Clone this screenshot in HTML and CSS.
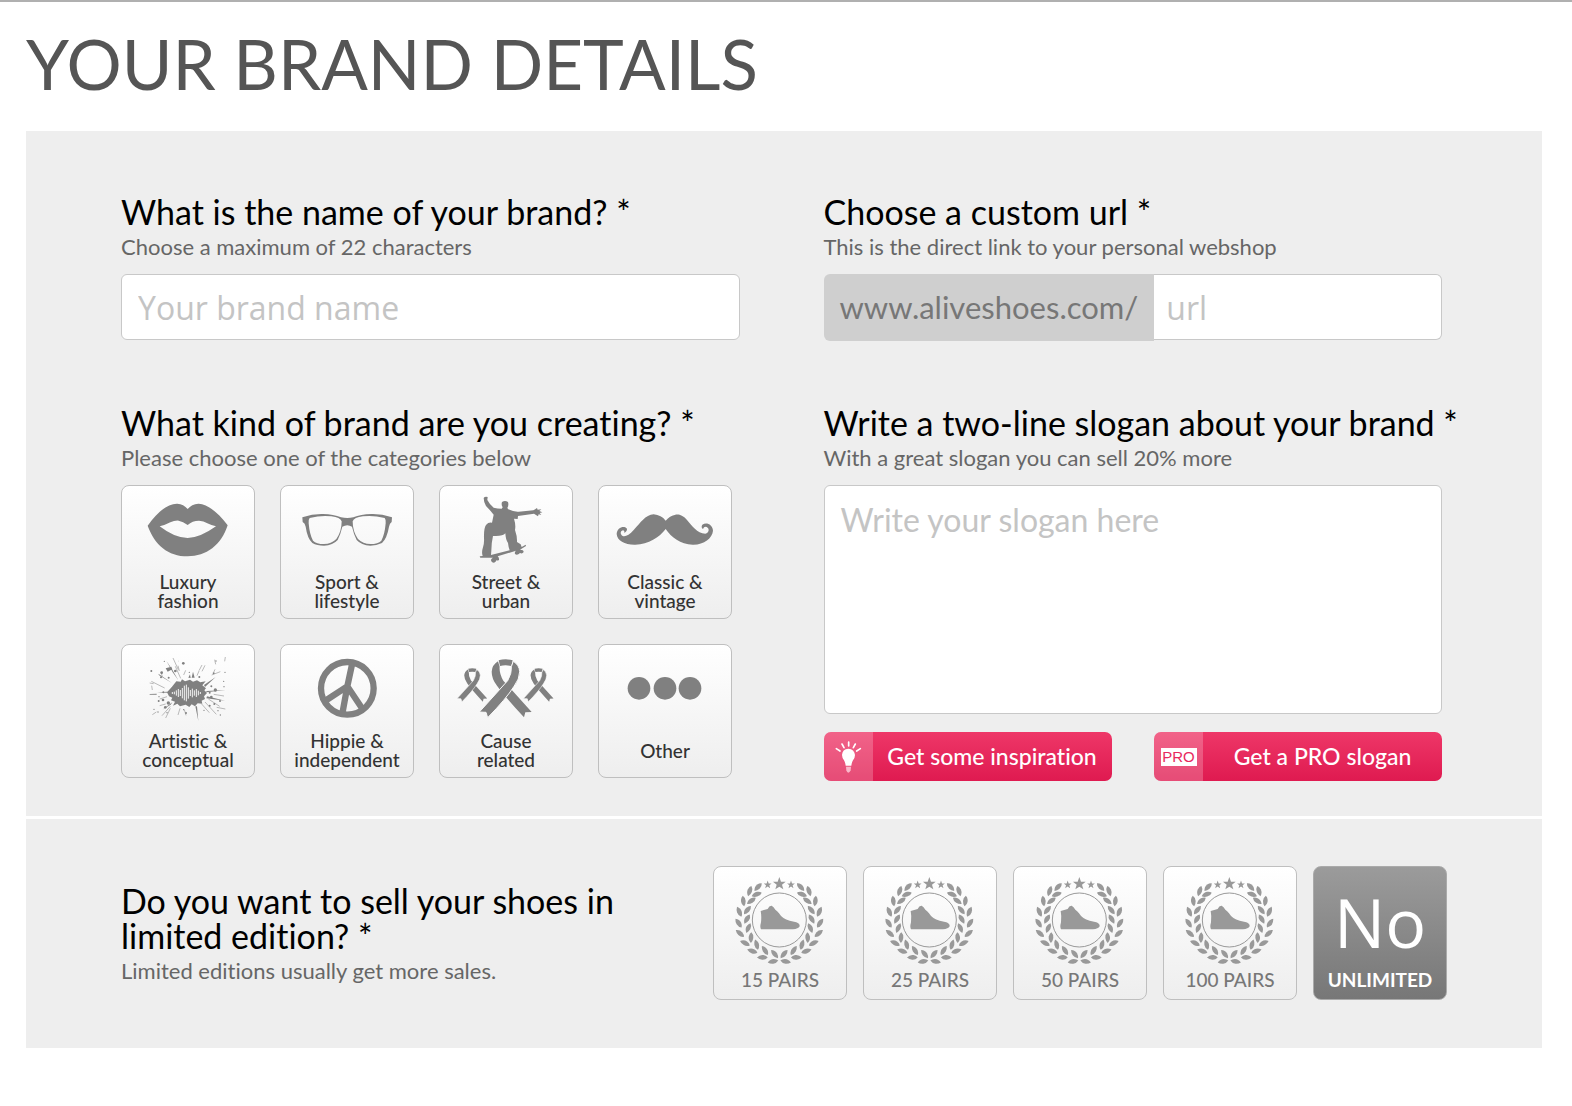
FILE: index.html
```html
<!DOCTYPE html>
<html lang="en">
<head>
    <meta charset="UTF-8">
    <title>Your Brand Details</title>
    <link rel="stylesheet" href="styles.css">
</head>
<body>
    <!-- shared shapes -->
    <svg class="defs" width="0" height="0" aria-hidden="true">
        <defs>
            <path id="leaf" d="M-16 2 Q-8 -8 3 -7 Q12 -6 16 -1 Q10 7 0 7 Q-9 7 -16 2Z"/>
            <path id="star" d="M0 -20 L5 -6 L19 -6 L8 3 L12 17 L0 9 L-12 17 L-8 3 L-19 -6 L-5 -6Z"/>
            <g id="branch">
                <use href="#leaf" transform="translate(175 94) rotate(-42)"/>
                <use href="#leaf" transform="translate(150 106) rotate(-67)"/>
                <use href="#leaf" transform="translate(131 136) rotate(-92)"/>
                <use href="#leaf" transform="translate(119 168) rotate(72)"/>
                <use href="#leaf" transform="translate(117 202) rotate(60)"/>
                <use href="#leaf" transform="translate(121 233) rotate(45)"/>
                <use href="#leaf" transform="translate(136 262) rotate(30)"/>
                <use href="#leaf" transform="translate(158 286) rotate(22)"/>
                <use href="#leaf" transform="translate(188 305) rotate(5)"/>
                <use href="#leaf" transform="translate(220 317) rotate(-5)"/>
                <use href="#leaf" transform="translate(171 116) rotate(-15)"/>
                <use href="#leaf" transform="translate(155 135) rotate(-30)"/>
                <use href="#leaf" transform="translate(143 163) rotate(-45)"/>
                <use href="#leaf" transform="translate(142 190) rotate(-55)"/>
                <use href="#leaf" transform="translate(146 217) rotate(-62)"/>
                <use href="#leaf" transform="translate(154 246) rotate(-82)"/>
                <use href="#leaf" transform="translate(171 267) rotate(80)"/>
                <use href="#leaf" transform="translate(196 284) rotate(62)"/>
                <use href="#leaf" transform="translate(225 295) rotate(55)"/>
            </g>
            <symbol id="laurel" viewBox="40 31 402 300">
                <use href="#branch"/>
                <use href="#branch" transform="translate(478 0) scale(-1 1)"/>
                <use href="#star" transform="translate(239 84)"/>
                <use href="#star" transform="translate(204 87) scale(.62)"/>
                <use href="#star" transform="translate(274 87) scale(.62)"/>
                <circle cx="239" cy="193" r="81" fill="none" stroke="#999" stroke-width="3"/>
                <path d="M183 166 L204 160 Q209 149 216 150 Q222 153 227 162 Q234 167 238 173 Q248 190 270 195 L290 200 Q301 204 300 212 Q296 220 280 221 H184 Q180 215 184 200 Q186 180 183 166Z"/>
            </symbol>
            <g id="ribbon">
                <path d="M189 108 Q190 88 208 77 L213 93 Q211 112 224 135 L309 229 L290 230 L286 245 Q230 185 205 150 Q189 130 189 108Z"/>
                <path d="M210 74 Q231 68 252 74 L248 91 Q231 87 214 91Z"/>
                <path d="M273 108 Q272 88 254 77 L248 93 Q250 112 237 135 L152 229 L172 230 L177 246 Q232 190 256 152 Q273 130 273 108Z" stroke="#f8f8f8" stroke-width="3"/>
            </g>
        </defs>
    </svg>

    <h1>YOUR BRAND DETAILS</h1>

    <form id="brand-form">
        <section class="panel details">
            <div class="field">
                <label class="question" for="brand_name">What is the name of your brand? *</label>
                <p class="hint">Choose a maximum of 22 characters</p>
                <input class="text-input" type="text" id="brand_name" name="brand_name" maxlength="22" placeholder="Your brand name">
            </div>

            <div class="field">
                <label class="question" for="brand_url">Choose a custom url *</label>
                <p class="hint">This is the direct link to your personal webshop</p>
                <div class="url-group">
                    <span class="url-prefix">www.aliveshoes.com/</span>
                    <input class="text-input" type="text" id="brand_url" name="brand_url" placeholder="url">
                </div>
            </div>

            <div class="field" role="radiogroup" aria-labelledby="kind-title">
                <h2 class="question" id="kind-title">What kind of brand are you creating? *</h2>
                <p class="hint">Please choose one of the categories below</p>
                <div class="categories">
                    <label class="tile">
                        <input type="radio" name="kind" value="luxury">
                        <svg viewBox="34 25 402 240">
                            <path fill-rule="evenodd" d="M114 147 C140 110 172 80 203 81 Q222 82 234 97 Q246 82 266 81 C292 80 328 110 354 146 C335 205 290 239 234 239 C175 239 135 205 114 147Z M150 149 Q165 146 182 137 Q195 131 207 132 Q220 134 234 145 Q248 132 268 132 Q282 133 293 140 Q305 146 319 149 Q270 184 234 184 Q195 184 150 149Z"/>
                        </svg>
                        <span>Luxury<br>fashion</span>
                    </label>
                    <label class="tile">
                        <input type="radio" name="kind" value="sport">
                        <svg viewBox="511 25 402 240">
                            <path fill-rule="evenodd" d="M578 122 Q610 111 640 112 Q672 113 694 122 Q713 126 731 122 Q753 113 785 112 Q815 111 847 122 L846 136 Q840 140 838 150 Q832 185 817 199 Q800 207 782 207 Q755 206 741 190 Q732 172 727 150 Q713 141 698 150 Q693 172 684 190 Q670 206 643 207 Q622 207 608 199 Q593 185 588 150 Q586 140 579 136Z M600 124 Q635 115 665 119 Q692 122 696 134 Q696 165 680 187 Q665 202 643 202 Q620 202 610 192 Q600 175 597 140 Q596 128 600 124Z M825 124 Q790 115 760 119 Q733 122 729 134 Q729 165 745 187 Q760 202 782 202 Q805 202 815 192 Q825 175 828 140 Q829 128 825 124Z"/>
                        </svg>
                        <span>Sport &amp;<br>lifestyle</span>
                    </label>
                    <label class="tile">
                        <input type="radio" name="kind" value="street">
                        <svg viewBox="31 25 402 240">
                            <path d="M165 64 Q168 59 177 61 L176 70 Q182 82 195 93 Q206 96 219 96 L222 92 Q217 84 220 76 Q229 70 238 76 Q241 85 236 94 L239 98 Q255 106 270 105 L314 101 Q320 98 325 94 L327 99 L338 98 L332 103 L341 107 L333 109 L338 115 L330 113 L328 119 L316 111 L268 118 L267 127 L256 126 Q262 145 259 160 Q266 180 265 196 L276 203 L279 211 L291 204 L292 208 L274 219 Q285 219 285 226 Q281 233 274 229 Q266 237 259 232 Q257 226 262 222 L207 239 Q212 243 211 249 Q208 253 203 251 Q202 257 196 258 Q187 257 187 249 Q189 244 193 243 L155 243 L153 239 L162 238 Q158 227 163 212 Q167 200 166 185 Q165 155 172 145 Q179 136 190 138 L195 114 Q183 99 172 88 Q165 76 165 64Z M193 178 Q188 200 188 222 L187 235 L243 221 Q239 210 238 199 Q231 190 230 170 Q222 180 193 178Z" fill-rule="evenodd"/>
                        </svg>
                        <span>Street &amp;<br>urban</span>
                    </label>
                    <label class="tile">
                        <input type="radio" name="kind" value="classic">
                        <svg viewBox="508 25 402 240">
                            <path d="M711 132 Q698 115 675 113 C650 114 635 140 615 160 C602 175 590 181 582 178 C573 173 575 161 584 161 Q589 164 587 169 Q598 162 594 155 C586 146 565 152 564 172 C565 192 590 205 620 204 C660 203 692 182 711 157 C728 182 755 203 792 204 C825 205 851 185 853 162 C852 143 833 135 821 144 Q816 152 823 157 Q826 149 834 151 C843 155 842 168 830 171 C805 170 790 147 775 130 C760 113 748 112 738 115 Q722 119 711 132Z"/>
                        </svg>
                        <span>Classic &amp;<br>vintage</span>
                    </label>
                    <label class="tile">
                        <input type="radio" name="kind" value="artistic">
                        <svg viewBox="34 25 402 240">
                            <path d="M172 170 L187 153 L200 137 L213 138 L217 131 L226 137 L241 132 L250 138 L262 134 L272 140 L288 137 L278 149 L289 158 L284 164 L292 172 L283 182 L286 190 L276 195 L278 204 L264 203 L256 212 L246 206 L239 214 L228 207 L211 212 L203 204 L190 210 L196 198 L184 194 L188 186 L178 182Z"/>
                            <path d="M170 75 L187 101 L206 134 L189 110Z M168 98 L185 93 L188 101 L174 108Z M183 207 L158 222 L188 200Z M283 148 L318 124 L286 154Z M290 166 L348 163 L290 170Z M246 126 L250 108 L255 126Z M262 212 L266 256 L257 212Z M292 182 L346 195 L290 188Z M120 175 L141 174 L141 177 L120 177Z M146 114 L188 143 L148 119Z M236 126 L241 116 L243 127Z M142 170 L174 168 L174 171Z"/>
                            <path class="spray" d="M190 67 L206 102 M197 92 L213 128 M205 90 L209 106 M228 104 L222 118 M268 106 L262 120 M277 88 L268 105 M286 89 L277 107 M125 137 L165 157 M120 142 L132 144 M150 190 L172 183 M150 210 L168 205 M157 240 L182 212 M182 218 L168 247 M211 218 L205 238 M224 222 L229 239 M296 190 L330 212 M286 199 L320 236 M306 118 L332 108 M312 176 L343 181 M276 205 L299 231 M154 109 L158 123 M312 110 L316 101 M315 72 L318 86 M347 64 L345 77 M126 150 L128 163 M128 237 L140 229 M321 215 L347 220"/>
                            <g>
                                <circle cx="221" cy="83" r="4"/><circle cx="156" cy="111" r="4"/><circle cx="125" cy="106" r="3"/><circle cx="154" cy="125" r="3"/>
                                <circle cx="317" cy="163" r="5"/><circle cx="300" cy="171" r="3"/><circle cx="305" cy="152" r="3"/><circle cx="343" cy="153" r="2"/>
                                <circle cx="176" cy="202" r="5"/><circle cx="160" cy="193" r="4"/><circle cx="147" cy="196" r="3"/><circle cx="167" cy="215" r="4"/>
                                <circle cx="305" cy="184" r="4"/><circle cx="314" cy="205" r="3"/><circle cx="325" cy="225" r="2"/><circle cx="332" cy="238" r="2"/>
                                <circle cx="148" cy="183" r="2"/><circle cx="300" cy="210" r="3"/><circle cx="229" cy="232" r="3"/><circle cx="222" cy="222" r="2"/>
                                <circle cx="164" cy="77" r="2"/><circle cx="177" cy="126" r="3"/><circle cx="197" cy="106" r="4"/><circle cx="269" cy="124" r="3"/>
                                <circle cx="342" cy="137" r="2"/><circle cx="319" cy="76" r="2"/><circle cx="312" cy="113" r="3"/><circle cx="133" cy="221" r="2"/>
                                <circle cx="145" cy="229" r="2"/><circle cx="161" cy="170" r="3"/><circle cx="331" cy="196" r="3"/><circle cx="346" cy="110" r="2"/>
                                <circle cx="283" cy="224" r="2"/><circle cx="172" cy="231" r="2"/><circle cx="206" cy="76" r="1"/><circle cx="239" cy="110" r="2"/>
                            </g>
                            <path fill="none" stroke="#f5f5f5" stroke-width="3" d="M188 169V175 M194 168V176 M200 164V180 M206 160V184 M212 163V181 M218 157V188 M224 150V194 M230 147V197 M236 155V189 M242 163V181 M248 159V185 M254 164V180 M260 160V184 M266 165V179 M272 169V175"/>
                        </svg>
                        <span>Artistic &amp;<br>conceptual</span>
                    </label>
                    <label class="tile">
                        <input type="radio" name="kind" value="hippie">
                        <svg viewBox="511 25 402 240">
                            <g fill="none" stroke="#808080" stroke-width="19">
                                <circle cx="713" cy="158" r="79"/>
                                <path d="M728 82 L713 152 L698 234 M646 196 L713 152 L760 222"/>
                            </g>
                        </svg>
                        <span>Hippie &amp;<br>independent</span>
                    </label>
                    <label class="tile">
                        <input type="radio" name="kind" value="cause">
                        <svg viewBox="31 25 402 240">
                            <use href="#ribbon" transform="translate(-2 57) scale(.575)"/>
                            <use href="#ribbon" transform="translate(197 57) scale(.575)"/>
                            <use href="#ribbon"/>
                        </svg>
                        <span>Cause<br>related</span>
                    </label>
                    <label class="tile">
                        <input type="radio" name="kind" value="other">
                        <svg viewBox="508 25 402 240">
                            <circle cx="631" cy="158" r="34"/>
                            <circle cx="709" cy="158" r="34"/>
                            <circle cx="784" cy="158" r="34"/>
                        </svg>
                        <span>Other</span>
                    </label>
                </div>
            </div>

            <div class="field">
                <label class="question" for="slogan">Write a two-line slogan about your brand *</label>
                <p class="hint">With a great slogan you can sell 20% more</p>
                <textarea class="text-input" id="slogan" name="slogan" placeholder="Write your slogan here"></textarea>
                <div class="actions">
                    <button type="button" class="btn">
                        <span class="btn-icon">
                            <svg viewBox="10 37 147 147">
                                <path fill="#fff" d="M64 106 Q65 88 83 87 Q101 88 103 106 Q103 114 97 122 Q93 129 92 138 H75 Q74 129 70 122 Q64 114 64 106Z"/>
                                <path fill="#f9b9cb" d="M76 141 H91 L90 152 Q87 159 83 159 Q79 159 77 152Z"/>
                                <path fill="none" stroke="#fff" stroke-width="5" stroke-linecap="round" d="M84 67V79 M64 73L70 84 M104 73L98 84 M47 87L58 94 M119 87L108 94"/>
                            </svg>
                        </span>
                        <span class="btn-text">Get some inspiration</span>
                    </button>
                    <button type="button" class="btn">
                        <span class="btn-icon"><span class="pro">PRO</span></span>
                        <span class="btn-text">Get a PRO slogan</span>
                    </button>
                </div>
            </div>
        </section>

        <section class="panel edition" role="radiogroup" aria-labelledby="edition-title">
            <div class="edition-text">
                <h2 class="question" id="edition-title">Do you want to sell your shoes in limited edition? *</h2>
                <p class="hint">Limited editions usually get more sales.</p>
            </div>
            <div class="editions">
                <label class="tile pairs">
                    <input type="radio" name="edition" value="15">
                    <svg><use href="#laurel"/></svg>
                    <span>15 PAIRS</span>
                </label>
                <label class="tile pairs">
                    <input type="radio" name="edition" value="25">
                    <svg><use href="#laurel"/></svg>
                    <span>25 PAIRS</span>
                </label>
                <label class="tile pairs">
                    <input type="radio" name="edition" value="50">
                    <svg><use href="#laurel"/></svg>
                    <span>50 PAIRS</span>
                </label>
                <label class="tile pairs">
                    <input type="radio" name="edition" value="100">
                    <svg><use href="#laurel"/></svg>
                    <span>100 PAIRS</span>
                </label>
                <label class="tile pairs selected">
                    <input type="radio" name="edition" value="unlimited" checked>
                    <b class="no">No</b>
                    <span>UNLIMITED</span>
                </label>
            </div>
        </section>
    </form>
</body>
</html>
```

FILE: styles.css
```css
* {
    box-sizing: border-box;
}
body {
    margin: 0;
    padding: 0 30px 0 26px;
    border-top: 2px solid #b0b0b0;
    background: #fff;
    font-family: Lato, sans-serif;
    font-variant-ligatures: none;
    color: #000;
}
.defs {
    position: absolute;
}
h1 {
    margin: 0;
    padding: 20px 0 25px;
    font-size: 69px;
    line-height: 84px;
    font-weight: 400;
    color: #555;
}
.panel {
    background: #eee;
    padding: 63px 100px 35px 95px;
}
.details {
    display: grid;
    grid-template-columns: 1fr 1fr;
    column-gap: 84px;
    row-gap: 64px;
}
.field {
    min-width: 0;
}
.question {
    display: block;
    margin: 0;
    font-size: 34px;
    line-height: 35px;
    font-weight: 400;
    white-space: nowrap;
}
.hint {
    margin: 5px 0 14px;
    font-size: 22px;
    line-height: 26px;
    color: #666;
}
.text-input {
    display: block;
    width: 100%;
    height: 66px;
    padding: 0 16px;
    border: 1px solid #c8c8c8;
    border-radius: 6px;
    background: #fff;
    font-family: "Open Sans", sans-serif;
    font-size: 32px;
    color: #333;
}
.text-input::placeholder {
    color: #c4c4c4;
    opacity: 1;
}
textarea.text-input {
    height: 229px;
    padding: 14px 16px;
    font-family: Lato, sans-serif;
    line-height: 40px;
    resize: none;
}
.url-group {
    display: flex;
}
.url-prefix {
    flex: none;
    padding: 0 16px;
    border-radius: 6px 0 0 6px;
    background: #cfcfcf;
    font-size: 31px;
    line-height: 67px;
    color: #777;
}
.url-group .text-input {
    flex: 1;
    min-width: 0;
    padding: 0 12px;
    border-left: 0;
    border-radius: 0 6px 6px 0;
}

/* option tiles */
.categories {
    display: grid;
    grid-template-columns: repeat(4, 134px);
    gap: 25px;
}
.tile {
    position: relative;
    display: flex;
    flex-direction: column;
    align-items: center;
    width: 134px;
    height: 134px;
    border: 1px solid #bfbfbf;
    border-radius: 8px;
    background: linear-gradient(#fff, #eee);
    color: #333;
    font-size: 19px;
    line-height: 19px;
    font-weight: 500;
    text-align: center;
    overflow: hidden;
    cursor: pointer;
}
.tile input {
    position: absolute;
    opacity: 0;
}
.tile svg {
    flex: none;
    width: 134px;
    height: 80px;
    margin-top: -1px;
    fill: #808080;
}
.tile .spray {
    fill: none;
    stroke: #999;
    stroke-width: 2px;
}
.tile span {
    display: flex;
    align-items: center;
    height: 52px;
}
.pairs {
    color: #777;
}
.pairs svg,
.pairs .no {
    height: 100px;
    margin-top: -1px;
    fill: #999;
}
.pairs span {
    height: 27px;
}
.selected {
    border-color: #aaa;
    background: linear-gradient(#9b9b9b, #777);
    color: #fff;
    font-weight: 700;
}
.no {
    font-family: "Open Sans", sans-serif;
    font-size: 68px;
    line-height: 112px;
    font-weight: 400;
}

/* slogan buttons */
.actions {
    display: flex;
    justify-content: space-between;
    margin-top: 18px;
}
.btn {
    display: flex;
    width: 288px;
    height: 49px;
    padding: 0;
    border: 0;
    border-radius: 7px;
    background: linear-gradient(#ee3768, #df1a50);
    color: #fff;
    font-family: Lato, sans-serif;
    font-size: 23px;
    line-height: 48px;
    font-weight: 500;
    font-variant-ligatures: none;
    overflow: hidden;
    cursor: pointer;
}
.btn-icon {
    display: flex;
    align-items: center;
    justify-content: center;
    width: 49px;
    height: 49px;
    background: rgba(255, 255, 255, 0.22);
}
.btn-icon svg {
    width: 49px;
    height: 49px;
}
.btn-text {
    flex: 1;
    white-space: nowrap;
}
.pro {
    width: 36px;
    height: 18px;
    background: #fff;
    color: #e8295e;
    font-family: "Liberation Sans", sans-serif;
    font-size: 15px;
    line-height: 18px;
}

/* limited edition row */
.edition {
    display: flex;
    align-items: center;
    justify-content: space-between;
    margin-top: 3px;
    padding: 47px 95px 48px;
}
.edition-text {
    width: 500px;
}
.edition .question {
    white-space: normal;
}
.edition .hint {
    margin-bottom: 0;
}
.editions {
    display: flex;
    gap: 16px;
}
```
